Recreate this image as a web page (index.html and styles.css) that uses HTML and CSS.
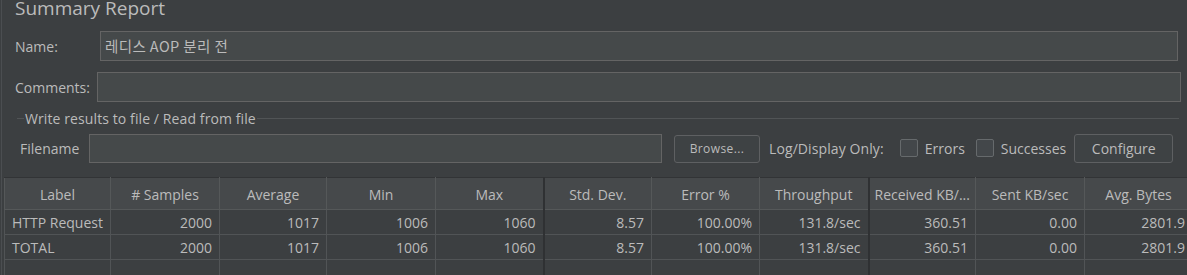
FILE: index.html
```html
<!DOCTYPE html>
<html lang="en">
<head>
    <meta charset="UTF-8">
    <meta name="viewport" content="width=device-width, initial-scale=1.0">
    <title>Summary Report</title><link rel="stylesheet" href="styles.css">
</head>
<body>
    <div class="panel">
        <h1 class="title">Summary Report</h1>

        <div class="row name-row">
            <label class="lbl">Name:</label>
            <div class="field">레디스 AOP 분리 전</div>
        </div>
        <div class="row comments-row">
            <label class="lbl">Comments:</label>
            <div class="field"></div>
        </div>

        <div class="legend">
            <span class="legend-line short"></span>
            <span class="legend-text">Write results to file / Read from file</span>
            <span class="legend-line"></span>
        </div>

        <div class="row file-row">
            <label class="lbl file-lbl">Filename</label>
            <div class="field file-field"></div>
            <button class="btn browse">Browse...</button>
            <span class="log-text">Log/Display Only:</span>
            <span class="check first"></span><span class="check-text">Errors</span>
            <span class="check"></span><span class="check-text">Successes</span>
            <button class="btn configure">Configure</button>
        </div>

        <table class="results">
            <colgroup>
                <col style="width:106px"><col style="width:109px"><col style="width:107px">
                <col style="width:109px"><col style="width:108px"><col style="width:108px">
                <col style="width:108px"><col style="width:109px"><col style="width:107px">
                <col style="width:109px"><col style="width:108px">
            </colgroup>
            <thead>
                <tr>
                    <th>Label</th>
                    <th># Samples</th>
                    <th>Average</th>
                    <th>Min</th>
                    <th>Max</th>
                    <th class="split">Std. Dev.</th>
                    <th>Error %</th>
                    <th>Throughput</th>
                    <th class="split">Received KB/...</th>
                    <th>Sent KB/sec</th>
                    <th>Avg. Bytes</th>
                </tr>
            </thead>
            <tbody id="rows"></tbody>
        </table>
    </div>
    <script>
        const rows = [
            ['HTTP Request', '2000', '1017', '1006', '1060', '8.57', '100.00%', '131.8/sec', '360.51', '0.00', '2801.9'],
            ['TOTAL', '2000', '1017', '1006', '1060', '8.57', '100.00%', '131.8/sec', '360.51', '0.00', '2801.9'],
            ['', '', '', '', '', '', '', '', '', '', '']
        ];

        document.getElementById('rows').innerHTML = rows.map(r => `
            <tr>
                ${r.map((v, i) => `<td class="${i === 0 ? 'txt' : 'num'}${i === 5 || i === 8 ? ' split' : ''}">${v}</td>`).join('')}
            </tr>
        `).join('');
    </script>
</body>
</html>
```

FILE: styles.css
```css
body {
    margin: 0;
    background-color: #3c3f41;
    color: #bbbbbb;
    font-family: "Open Sans", "Noto Sans CJK KR", sans-serif;
    font-size: 14px;
    overflow: hidden;
    height: 275px;
}

.panel {
    margin-left: 1px;
    border-left: 1px solid #4b4e51;
    height: 275px;
    overflow: hidden;
}

.title {
    margin: 0;
    height: 31px;
    padding-left: 13px;
    font-size: 19px;
    font-weight: normal;
    line-height: 20px;
    margin-top: -2px;
    margin-bottom: 2px;
}

.row {
    display: flex;
    align-items: center;
    height: 30px;
    padding-left: 13px;
}

.lbl {
    flex: none;
}

.name-row .lbl {
    width: 85px;
}

.name-row .field {
    margin-right: 9px;
    padding-left: 4px;
    font-size: 14.5px;
}

.comments-row {
    margin-top: 11px;
}

.comments-row .lbl {
    width: 82px;
}

.comments-row .field {
    margin-right: 6px;
}

.field {
    flex: 1;
    box-sizing: border-box;
    height: 30px;
    background-color: #45494a;
    border: 1px solid #646464;
    padding: 0 6px;
    line-height: 28px;
    font-family: "Noto Sans CJK KR", "Open Sans", sans-serif;
    letter-spacing: 0.4px;
}

.legend {
    display: flex;
    align-items: center;
    height: 18px;
    margin-top: 7px;
    padding-left: 15px;
    padding-right: 8px;
}

.legend-line {
    flex: 1;
    height: 1px;
    background-color: #515456;
}

.legend-line.short {
    flex: none;
    width: 7px;
}

.legend-text {
    padding: 0 1px;
    letter-spacing: 0.1px;
}

.file-row {
    margin-top: 7px;
    height: 29px;
    padding-left: 18px;
}

.file-lbl {
    width: 69px;
}

.file-field {
    flex: none;
    width: 573px;
    height: 29px;
}

.btn {
    font-family: "Open Sans", sans-serif;
    color: #bbbbbb;
    background-color: #3e4244;
    border: 1px solid #5e6062;
    border-radius: 3px;
    box-sizing: border-box;
    padding: 0;
}

.browse {
    margin-left: 12px;
    width: 86px;
    height: 28px;
    font-size: 12px;
    letter-spacing: 0.4px;
}

.log-text {
    margin-left: 9px;
    letter-spacing: 0.1px;
}

.check {
    width: 18px;
    height: 18px;
    box-sizing: border-box;
    border: 1px solid #666a6c;
    background-color: #43474a;
    border-radius: 2px;
    margin-left: 11px;
    margin-right: 7px;
    margin-top: -2px;
}

.check.first {
    margin-left: 16px;
}

.configure {
    margin-left: 8px;
    width: 99px;
    height: 29px;
    font-size: 14px;
}

.results {
    margin-top: 14px;
    margin-left: 2px;
    border-collapse: collapse;
    table-layout: fixed;
    width: 1188px;
}

.results th {
    height: 29px;
    padding: 2px 0 0;
    font-weight: normal;
    background-color: #46494b;
    border: 1px solid #555859;
    border-top-color: #323436;
    text-align: center;
    white-space: nowrap;
    overflow: hidden;
}

.results td {
    height: 23px;
    padding: 1px 7px 0;
    border: 1px solid #515456;
    white-space: nowrap;
    overflow: hidden;
}

.results .num {
    text-align: right;
}

.results .txt {
    text-align: left;
}

.results .split {
    border-left: 2px solid #2f3133;
}
```
